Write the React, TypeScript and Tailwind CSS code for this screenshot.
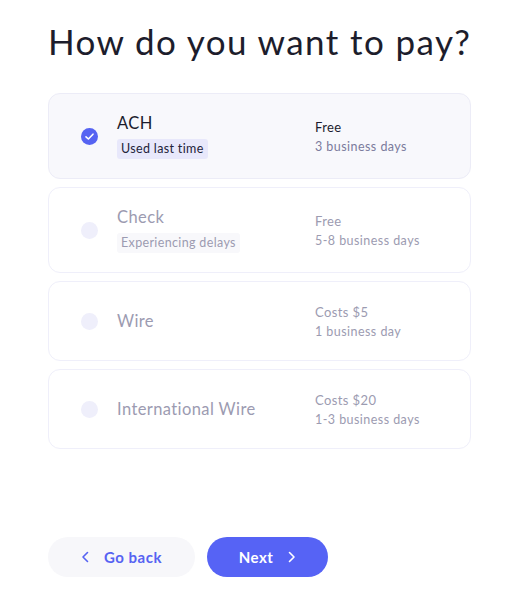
import React from "react";

type Opt = {
  name: string;
  badge?: string;
  cost: string;
  time: string;
  selected?: boolean;
  tall?: boolean;
};

const opts: Opt[] = [
  { name: "ACH", badge: "Used last time", cost: "Free", time: "3 business days", selected: true, tall: true },
  { name: "Check", badge: "Experiencing delays", cost: "Free", time: "5-8 business days", tall: true },
  { name: "Wire", cost: "Costs $5", time: "1 business day" },
  { name: "International Wire", cost: "Costs $20", time: "1-3 business days" },
];

function Card({ o }: { o: Opt }) {
  const sel = !!o.selected;
  return (
    <div
      className={
        "flex items-center rounded-[12px] border pl-[32px] " +
        (o.tall ? "h-[86px] " : "h-[80px] ") +
        (sel ? "bg-[#f8f8fc] border-[#ececf7]" : "bg-white border-[#efeffa]")
      }
    >
      {sel ? (
        <svg width="17" height="17" viewBox="0 0 17 17" className="shrink-0">
          <circle cx="8.5" cy="8.5" r="8.5" fill="#5663f2" />
          <path d="M5 8.8 L7.4 11 L12 6.2" stroke="#fff" strokeWidth="1.6" fill="none" strokeLinecap="round" strokeLinejoin="round" />
        </svg>
      ) : (
        <div className="w-[17px] h-[17px] rounded-full bg-[#efeffb] shrink-0" />
      )}
      <div className="ml-[19px] w-[198px] flex flex-col items-start">
        <div className={"text-[16.5px] leading-[20px] tracking-[0.4px] " + (sel ? "text-[#1c1c2e]" : "text-[#9c9bb1]")}>
          {o.name}
        </div>
        {o.badge && (
          <div
            className={
              "mt-[6px] px-[4px] h-[20px] flex items-center rounded-[3px] text-[12.5px] tracking-[0.35px] " +
              (sel ? "bg-[#e8e8fb] text-[#23233a]" : "bg-[#f8f8fb] text-[#9c9bb1]")
            }
          >
            {o.badge}
          </div>
        )}
      </div>
      <div className="flex flex-col">
        <div className={"text-[13px] leading-[18px] tracking-[0.4px] " + (sel ? "text-[#1c1c2e]" : "text-[#9c9bb1]")}>
          {o.cost}
        </div>
        <div className={"mt-[3px] text-[12.5px] leading-[16px] tracking-[0.45px] " + (sel ? "text-[#7b7b9c]" : "text-[#9c9bb1]")}>
          {o.time}
        </div>
      </div>
    </div>
  );
}

export default function App() {
  return (
    <div className="w-[509px] h-[599px] bg-white pl-[48px] pt-[20px]" style={{ fontFamily: "Lato, 'Noto Sans', sans-serif" }}>
      <div className="w-[423px]">
        <h1 className="text-[35px] leading-[42px] text-[#1d1d2c] tracking-[1.4px] font-normal whitespace-nowrap">
          How do you want to pay?
        </h1>
        <div className="mt-[31px] flex flex-col gap-[8px]">
          {opts.map((o) => (
            <Card key={o.name} o={o} />
          ))}
        </div>
        <div className="mt-[88px] flex gap-[12px]">
          <button className="w-[147px] h-[40px] rounded-full bg-[#f7f7fa] flex items-center justify-center gap-[14px] text-[#5663f2] text-[15px] font-bold tracking-[0.5px]">
            <svg width="9" height="12" viewBox="0 0 9 12">
              <path d="M6.5 1.5 L2 6 L6.5 10.5" stroke="#5663f2" strokeWidth="1.6" fill="none" strokeLinecap="round" strokeLinejoin="round" />
            </svg>
            Go back
          </button>
          <button className="w-[121px] h-[40px] rounded-full bg-[#5663f5] flex items-center justify-center gap-[14px] text-white text-[15px] font-bold tracking-[0.5px]">
            Next
            <svg width="9" height="12" viewBox="0 0 9 12">
              <path d="M2.5 1.5 L7 6 L2.5 10.5" stroke="#fff" strokeWidth="1.6" fill="none" strokeLinecap="round" strokeLinejoin="round" />
            </svg>
          </button>
        </div>
      </div>
    </div>
  );
}
